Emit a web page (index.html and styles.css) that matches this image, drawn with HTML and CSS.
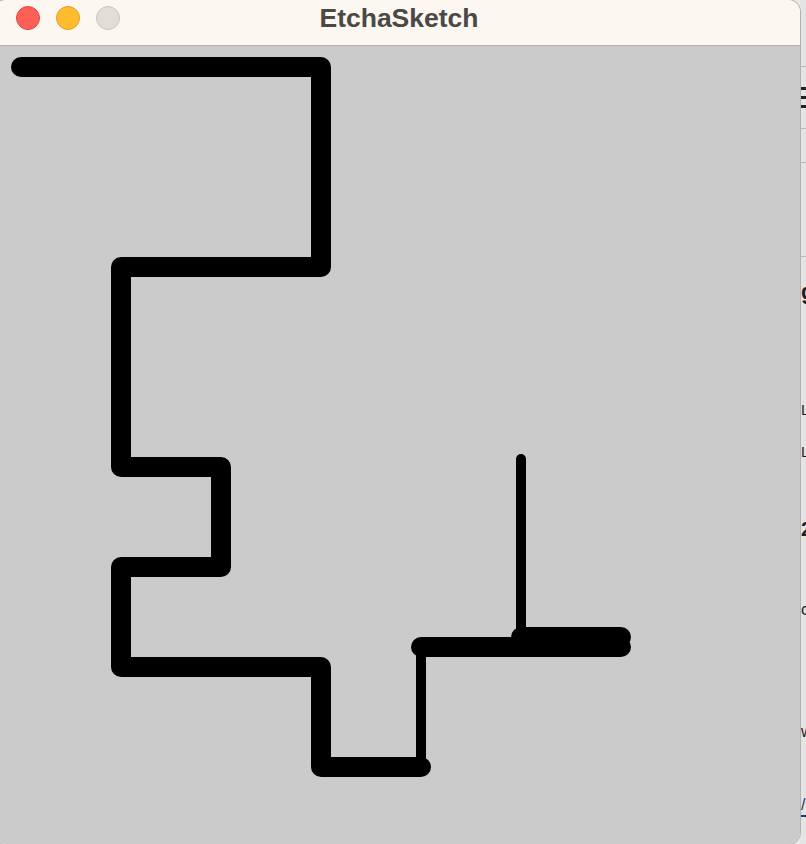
FILE: index.html
```html
<!DOCTYPE html>
<html lang="en">
<head>
<meta charset="utf-8">
<title>EtchaSketch</title>
<link rel="stylesheet" href="styles.css">
</head>
<body>
<div class="screen">
  <div class="window">
    <div class="titlebar">
      <div class="lights">
        <span class="light red"></span>
        <span class="light yellow"></span>
        <span class="light gray"></span>
      </div>
      <div class="title">EtchaSketch</div>
      <div class="spacer"></div>
    </div>
    <div class="canvas">
      <svg class="drawing" width="806" height="798" viewBox="-6 46 806 798" xmlns="http://www.w3.org/2000/svg">
        <g fill="none" stroke="#000" stroke-linecap="round" stroke-linejoin="round">
          <path d="M21 67 H321 V267 H121 V467 H221 V567 H121 V667 H321 V767 H421" stroke-width="20"/>
          <path d="M421 767 V647" stroke-width="10"/>
          <path d="M421 647 H621" stroke-width="20"/>
          <path d="M521 637 H621" stroke-width="20"/>
          <path d="M521 647 V459" stroke-width="10"/>
        </g>
      </svg>
    </div>
  </div>
  <div class="behind">
    <div class="rule r1"></div>
    <div class="bar b1"></div>
    <div class="bar b2"></div>
    <div class="bar b3"></div>
    <div class="rule r2"></div>
    <div class="rule r3"></div>
    <div class="rule r4"></div>
    <div class="frag f-g">g</div>
    <div class="frag f-l1">L</div>
    <div class="frag f-l2">L</div>
    <div class="frag f-2">2</div>
    <div class="frag f-c">c</div>
    <div class="frag f-w">w</div>
    <div class="frag f-link">/</div>
  </div>
</div>
</body>
</html>
```
FILE: styles.css
```css
html, body {
  margin: 0;
  padding: 0;
}
body {
  width: 806px;
  height: 844px;
  overflow: hidden;
  background: #e9e9e9;
  font-family: "Liberation Sans", Arial, sans-serif;
}
.screen {
  display: flex;
  width: 806px;
  height: 844px;
}
.window {
  flex: none;
  width: 806px;
  height: 844px;
  margin-left: -6px;
  border-radius: 12px;
  overflow: hidden;
  display: flex;
  flex-direction: column;
  box-shadow: 0 0 0 1px rgba(0, 0, 0, 0.22);
  position: relative;
  z-index: 1;
}
.titlebar {
  flex: none;
  height: 45px;
  border-bottom: 1px solid #b3b0ac;
  background: #fcf7f0;
  display: grid;
  grid-template-columns: 1fr auto 1fr;
}
.lights {
  display: flex;
  gap: 16px;
  padding-left: 22px;
  padding-top: 6px;
  align-items: flex-start;
}
.light {
  width: 24px;
  height: 24px;
  border-radius: 50%;
  box-sizing: border-box;
}
.light.red {
  background: #fe5f57;
  border: 1px solid #e2463f;
}
.light.yellow {
  background: #febc2e;
  border: 1px solid #e0a125;
}
.light.gray {
  background: #e1ddd8;
  border: 1px solid #c8c4bf;
}
.title {
  font-weight: bold;
  font-size: 26.5px;
  line-height: 30px;
  margin-top: 3px;
  color: #4b4845;
  padding-left: 4px;
}
.canvas {
  flex: 1;
  background: #cbcbcb;
}
.drawing {
  display: block;
}
.behind {
  flex: none;
  width: 6px;
  height: 844px;
  overflow: hidden;
  background: #e4e4e4;
  display: flex;
  flex-direction: column;
  padding-left: 1px;
  box-sizing: border-box;
}
.rule {
  height: 1px;
  background: #b9b9b9;
  flex: none;
}
.r1 { margin-top: 66px; }
.r2 { margin-top: 20px; }
.r3 { margin-top: 33px; }
.r4 { margin-top: 93px; }
.bar {
  height: 3px;
  background: #222;
  flex: none;
}
.b1 { margin-top: 20px; }
.b2 { margin-top: 6px; }
.b3 { margin-top: 6px; }
.frag {
  flex: none;
  color: #1e1e1e;
  white-space: nowrap;
  height: 20px;
  line-height: 20px;
  font-size: 15px;
}
.f-g {
  margin-top: 23px;
  height: 24px;
  line-height: 24px;
  font-size: 22px;
  font-weight: bold;
}
.f-l1 { margin-top: 96px; }
.f-l2 { margin-top: 22px; }
.f-2 {
  margin-top: 55px;
  height: 24px;
  line-height: 24px;
  font-size: 20px;
  font-weight: bold;
}
.f-c { margin-top: 59px; font-size: 16px; }
.f-w { margin-top: 102px; font-size: 16px; }
.f-link {
  margin-top: 53px;
  color: #1d3a6d;
  font-size: 16px;
  border-bottom: 2px solid #1d3a6d;
}
```
